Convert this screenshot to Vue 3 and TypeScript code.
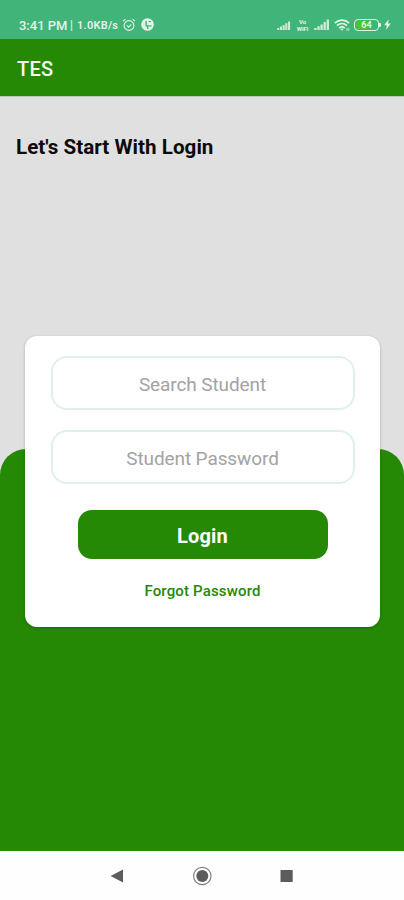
<script setup lang="ts">
import { ref } from 'vue'

const student = ref('')
const password = ref('')
const batteryLevel = 64
</script>

<template>
  <div class="screen">
    <div class="status">
      <span class="time">3:41 PM</span>
      <span class="divider">|</span>
      <span class="speed">1.0KB/s</span>
      <svg class="alarm" width="14" height="14" viewBox="0 0 14 14" fill="none" stroke="currentColor">
        <circle cx="7" cy="7.5" r="4.9" stroke-width="1.1" />
        <path d="M1 3.2 3.4 1.2M13 3.2 10.6 1.2M4.8 7.4l1.7 1.7 2.8-2.8" stroke-width="1.1" />
      </svg>
      <svg class="app-badge" width="13" height="13" viewBox="0 0 13 13">
        <circle cx="6.5" cy="6.5" r="6.3" fill="currentColor" />
        <path d="M4.4 3h1.4v4.2h4.8v1.3H7.4v2.6H6V8.5H4.4Z" class="cut" />
        <path d="M7.8 3h2.1v1.2H7.8Z" class="cut" />
      </svg>
      <div class="right">
        <svg class="signal" width="14" height="10" viewBox="0 0 14 10" fill="currentColor">
          <path d="M.2 8h2.1v2H.2zM2.9 6.6H5V10H2.9zM5.6 5h2.1v5H5.6z" />
          <path d="M8.3 3.2h2.1V10H8.3zM11 1.5h2.1V10H11z" />
        </svg>
        <span class="vowifi"><span>Vo</span><span>WiFi</span></span>
        <svg class="signal second" width="16" height="11" viewBox="0 0 16 11" fill="currentColor">
          <path d="M.2 9h2.4v2H.2zM3.3 7.3h2.4V11H3.3zM6.4 5.4h2.4V11H6.4zM9.5 3h2.4v8H9.5zM12.6.5H15V11h-2.4z" />
        </svg>
        <svg class="wifi" width="16" height="12" viewBox="0 0 16 12" fill="none" stroke="currentColor">
          <path d="M.8 4.2C5 .2 11 .2 15.2 4.2M3 6.7c3-2.8 7-2.8 10 0M5.2 9.1c1.7-1.5 3.9-1.5 5.6 0" stroke-width="1.7" />
          <path d="m8 11.7-1.8-2h3.6Z" fill="currentColor" stroke="none" />
          <path d="M13 9v2.8M14.8 9v2.8" stroke-width=".8" />
        </svg>
        <span class="battery">
          <span class="charge" :style="{ width: batteryLevel + '%' }"></span>
          <span class="level">{{ batteryLevel }}</span>
        </span>
        <span class="terminal"></span>
        <svg class="bolt" width="7" height="11" viewBox="0 0 7 11" fill="currentColor">
          <path d="M4.6.3.2 6.2h2.6l-.7 4.5 4.7-6.1H4Z" />
        </svg>
      </div>
    </div>

    <header class="appbar">TES</header>

    <main class="content">
      <h1>Let's Start With Login</h1>
      <div class="panel">
        <form class="card" @submit.prevent>
          <input v-model="student" type="text" placeholder="Search Student" />
          <input v-model="password" type="password" placeholder="Student Password" />
          <button class="login" type="submit">Login</button>
          <a class="forgot">Forgot Password</a>
        </form>
      </div>
    </main>

    <nav class="nav">
      <svg width="14" height="14" viewBox="0 0 14 14"><path d="M.6 7 13 .6v12.8Z" fill="#5c5c5c" /></svg>
      <svg width="20" height="20" viewBox="0 0 20 20">
        <circle cx="10.3" cy="10" r="8.7" fill="none" stroke="#808080" stroke-width="1.2" />
        <circle cx="10.3" cy="10" r="6" fill="#5c5c5c" />
      </svg>
      <svg width="14" height="14" viewBox="0 0 14 14"><path d="M.5 1h12.2v12H.5z" fill="#5c5c5c" /></svg>
    </nav>
  </div>
</template>

<style>
body {
  background: #fefefe;
}
</style>

<style scoped>
* {
  box-sizing: border-box;
}
.screen {
  width: 404px;
  height: 900px;
  display: flex;
  flex-direction: column;
  overflow: hidden;
  background: #fefefe;
  font-family: Roboto, sans-serif;
}
.screen svg {
  display: block;
  flex: none;
}
.status {
  height: 39px;
  flex: none;
  padding: 10px 13px 0 19px;
  display: flex;
  align-items: center;
  background: #40b479;
  color: #e3f5e6;
  white-space: nowrap;
}
.time {
  width: 51px;
  padding-top: 1px;
  font-size: 13px;
  font-weight: 500;
  letter-spacing: -0.02px;
}
.divider {
  width: 7px;
  font-size: 12px;
}
.speed {
  width: 45px;
  padding-top: 1px;
  font-size: 11px;
  font-weight: 600;
  letter-spacing: 0.25px;
}
.app-badge {
  margin-left: 5px;
}
.cut {
  fill: #40b479;
}
.right {
  margin-left: auto;
  display: flex;
  align-items: center;
}
.signal {
  margin-top: 1px;
  opacity: 0.85;
}
.second {
  margin-top: 0;
}
.vowifi {
  width: 15px;
  margin: 0 4px 0 4px;
  display: flex;
  flex-direction: column;
  align-items: center;
  font-size: 6px;
  line-height: 7px;
  font-weight: 700;
}
.wifi {
  margin: 0 4px 0;
}
.battery {
  position: relative;
  width: 25px;
  height: 12px;
  padding: 1px;
  display: flex;
  border: 1.5px solid #ddf4df;
  border-radius: 4px;
}
.charge {
  background: #4dc32b;
  border-radius: 2px;
}
.level {
  position: absolute;
  inset: 0;
  text-align: center;
  font-size: 9px;
  line-height: 10px;
  font-weight: 700;
}
.terminal {
  width: 2px;
  height: 4px;
  margin-right: 3px;
  border-radius: 0 1px 1px 0;
  background: #ddf4df;
}
.appbar {
  height: 57px;
  flex: none;
  padding: 3px 17px 0;
  display: flex;
  align-items: center;
  background: #258905;
  color: #f1faec;
  font-size: 20px;
  font-weight: 500;
  letter-spacing: 0.2px;
}
.content {
  height: 755px;
  flex: none;
  display: flex;
  flex-direction: column;
  background: #e0e0e0;
  border-top: 1px solid #b8c9b1;
}
h1 {
  height: 352px;
  flex: none;
  margin: 0;
  padding: 37px 16px 0;
  color: #0c0c0c;
  font-size: 20.6px;
  line-height: 26px;
  font-weight: 700;
  letter-spacing: 0.03px;
}
.panel {
  flex: 1;
  padding: 0 24px 0 25px;
  background: #258905;
  border-radius: 26px 26px 0 0;
}
.card {
  height: 291px;
  margin-top: -113px;
  padding: 20px 26px 0;
  display: flex;
  flex-direction: column;
  align-items: center;
  background: #fff;
  border-radius: 12px;
  box-shadow: 0 1px 3px rgba(0, 0, 0, 0.25);
}
input {
  width: 304px;
  height: 54px;
  flex: none;
  margin: 0 0 20px;
  padding: 2px 0 0;
  border: 2px solid #def1ea;
  border-radius: 16px;
  background: #fff;
  color: #333;
  font: 400 19px Roboto, sans-serif;
  letter-spacing: -0.1px;
  text-align: center;
  outline: none;
}
input::placeholder {
  color: #a3a3a3;
  opacity: 1;
}
.login {
  width: 250px;
  height: 49px;
  margin-top: 6px;
  padding: 2px 0 0;
  border: 0;
  border-radius: 14px;
  background: #258905;
  color: #fff;
  font: 700 20px Roboto, sans-serif;
  letter-spacing: 0.15px;
}
.forgot {
  margin-top: 22px;
  color: #258905;
  font-size: 15px;
  line-height: 20px;
  font-weight: 500;
  letter-spacing: 0.16px;
}
.nav {
  flex: 1;
  padding: 1px 110px 0;
  display: flex;
  align-items: center;
  justify-content: space-between;
}
</style>
